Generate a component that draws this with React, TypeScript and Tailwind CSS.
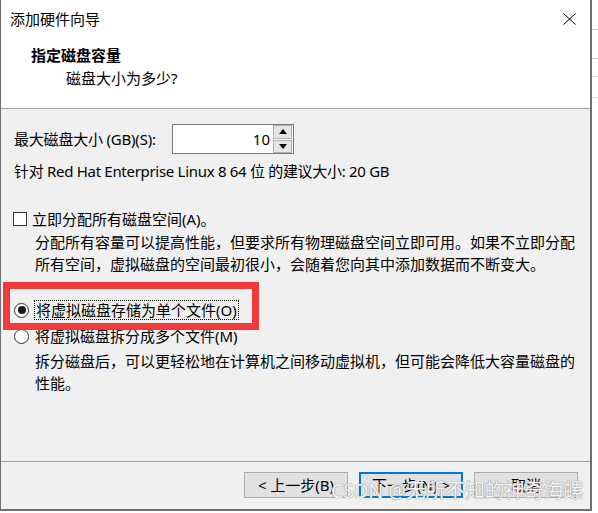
import React from "react";

const FONT = {
  fontFamily: '"Noto Sans", "Noto Sans CJK SC", sans-serif',
};

function SpinBox({ value }: { value: string }) {
  return (
    <div className="flex h-[30px] w-[122px] items-center border border-[#7a7a7a] bg-white pr-[1px]">
      <span className="flex-1 pr-[3px] text-right leading-[22px]">{value}</span>
      <div className="flex h-[28px] w-[19px] flex-col gap-[1px]">
        <div className="flex flex-1 items-center justify-center border border-[#adadad] bg-[#e5e5e5]">
          <svg width="8" height="5" viewBox="0 0 8 5">
            <path d="M0 5 L4 0 L8 5 Z" fill="#000" />
          </svg>
        </div>
        <div className="flex flex-1 items-center justify-center border border-[#adadad] bg-[#e5e5e5]">
          <svg width="8" height="5" viewBox="0 0 8 5">
            <path d="M0 0 L4 5 L8 0 Z" fill="#000" />
          </svg>
        </div>
      </div>
    </div>
  );
}

function Radio({ checked }: { checked?: boolean }) {
  return (
    <span className="flex h-[15px] w-[15px] shrink-0 items-center justify-center rounded-full border border-[#333] bg-white">
      {checked && <span className="h-[8px] w-[8px] rounded-full bg-[#1a1a1a]" />}
    </span>
  );
}

function Button({ label, primary }: { label: string; primary?: boolean }) {
  return (
    <div
      className={`flex h-[26px] w-[104px] items-center justify-center bg-[#e1e1e1] leading-[20px] ${
        primary ? "border-2 border-[#0078d7]" : "border border-[#adadad]"
      }`}
    >
      {label}
    </div>
  );
}

export default function App() {
  return (
    <div
      className="relative flex h-[513px] w-[598px] overflow-hidden bg-white text-[15px] text-black"
      style={FONT}
    >
      {/* 对话框 */}
      <div className="flex h-[511px] w-[592px] shrink-0 flex-col border-b-2 border-l border-r-2 border-[#6f6f6f] bg-[#f0f0f0]">
        {/* 标题栏 + 头部 */}
        <div className="h-[109px] shrink-0 border-b border-[#a0a0a0] bg-white">
          <div className="flex h-[38px] items-center justify-between pl-[9px] pr-[14px]">
            <span className="leading-[22px]">添加硬件向导</span>
            <svg width="13" height="12" viewBox="0 0 13 12">
              <path d="M0.5 0.5 L12.5 11.5 M12.5 0.5 L0.5 11.5" stroke="#000" strokeWidth="1" />
            </svg>
          </div>
          <div className="mt-[6px] pl-[30px] font-bold leading-[22px]">指定磁盘容量</div>
          <div className="mt-[1px] pl-[65px] leading-[22px]">磁盘大小为多少?</div>
        </div>

        {/* 内容 */}
        <div className="flex-1 px-[12px]">
          <div className="mt-[15px] flex items-center gap-[6px] pl-[1px]">
            <span className="w-[152px] leading-[22px] tracking-[-0.2px]">最大磁盘大小 (GB)(S):</span>
            <SpinBox value="10" />
          </div>
          <div className="mt-[6px] pl-[1px] leading-[22px] tracking-[-0.3px]">
            针对 Red Hat Enterprise Linux 8 64 位 的建议大小: 20 GB
          </div>

          <div className="mt-[26px] flex items-center gap-[5px]">
            <span className="h-[14px] w-[14px] shrink-0 border border-[#333] bg-white" />
            <span className="leading-[22px]">立即分配所有磁盘空间(A)。</span>
          </div>
          <div className="mt-[1px] pl-[22px] leading-[22px]">
            分配所有容量可以提高性能，但要求所有物理磁盘空间立即可用。如果不立即分配
            <br />
            所有空间，虚拟磁盘的空间最初很小，会随着您向其中添加数据而不断变大。
          </div>

          <div className="mt-[25px] flex items-center gap-[5px] pl-[1px]">
            <Radio checked />
            <span className="border border-dotted border-black px-[1px] leading-[18px]">
              将虚拟磁盘存储为单个文件(O)
            </span>
          </div>
          <div className="mt-[5px] flex items-center gap-[6px] pl-[1px]">
            <Radio />
            <span className="leading-[22px]">将虚拟磁盘拆分成多个文件(M)</span>
          </div>
          <div className="mt-[3px] pl-[22px] leading-[22px]">
            拆分磁盘后，可以更轻松地在计算机之间移动虚拟机，但可能会降低大容量磁盘的
            <br />
            性能。
          </div>
        </div>

        {/* 底部按钮 */}
        <div className="flex h-[48px] shrink-0 items-start justify-end gap-[11px] border-t border-[#a0a0a0] pr-[12px] pt-[10px]">
          <Button label="< 上一步(B)" />
          <Button label="下一步(N) >" primary />
          <Button label="取消" />
        </div>
      </div>

      {/* 背后窗口的边 */}
      <div className="flex flex-1 flex-col">
        <div className="mt-[29px] h-px bg-[#cfcfcf]" />
        <div className="mt-[28px] h-px bg-[#cfcfcf]" />
        <div className="mt-[17px] h-px bg-[#e0e0e0]" />
        <div className="mt-[20px] h-px bg-[#e0e0e0]" />
      </div>

      {/* 红色标注框 */}
      <div className="absolute left-[3px] top-[282px] h-[48px] w-[256px] border-[7px] border-[#ef3b3b]" />

      {/* 水印 */}
      <div className="absolute left-[331px] top-[478px] whitespace-nowrap text-[20px] leading-[26px] tracking-[-0.3px] text-[#f4f4f4] [text-shadow:0_0_1px_#8a8a8a,0_0_1px_#8a8a8a]">
        CSDN @无所不知的神奇海螺
      </div>
    </div>
  );
}
